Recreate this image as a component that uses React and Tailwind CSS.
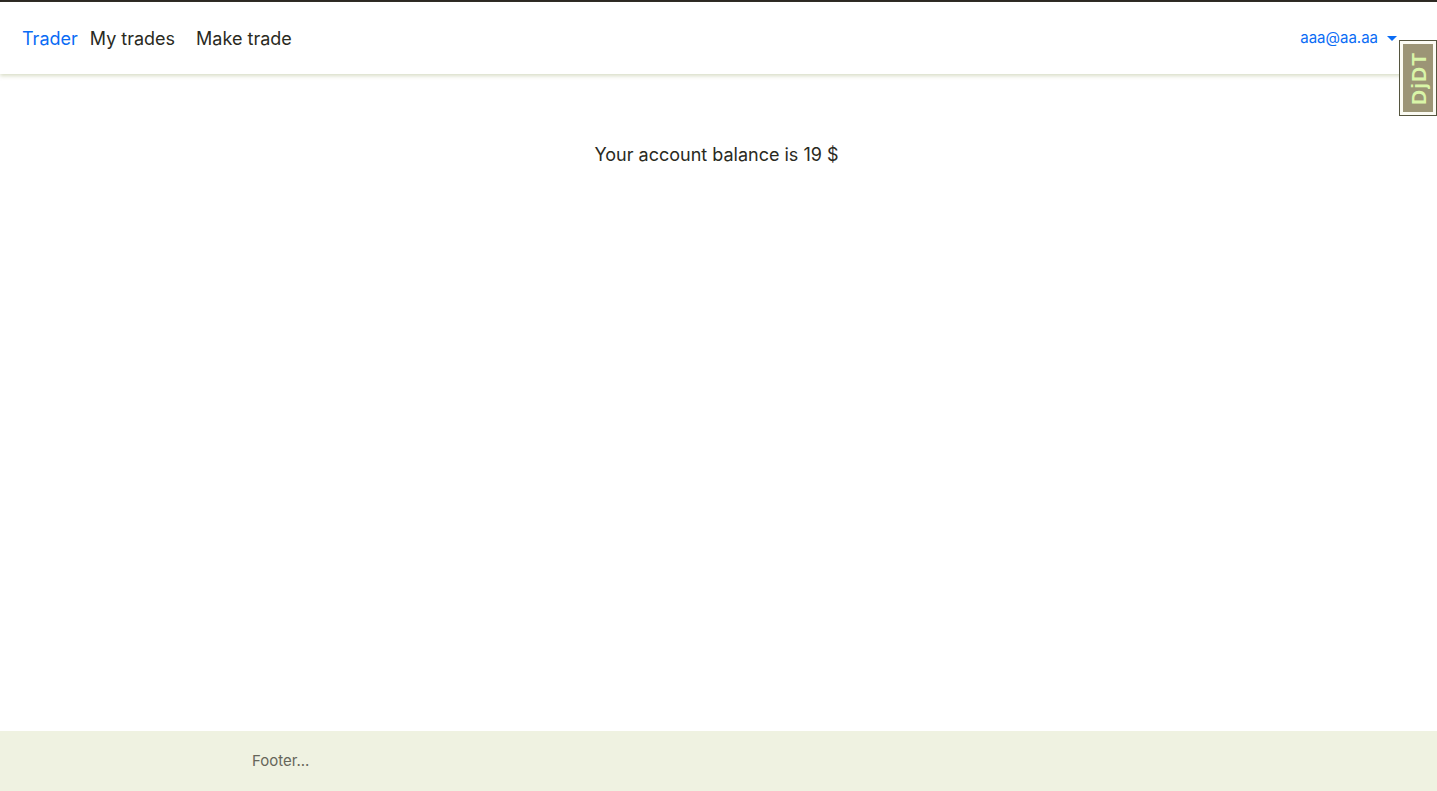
export default function App() {
  return (
    <div className="min-h-screen flex flex-col bg-white font-['Inter',sans-serif] text-[#2a2a1e]">
      <div className="h-[2px] bg-[#2a2622]" />
      <nav className="relative h-[72px] flex items-center justify-between pl-[22px] pr-[40px] bg-white shadow-[0_2px_4px_rgba(170,180,130,0.45)] z-10">
        <div className="flex items-center text-[18px]">
          <a className="text-[#0a6cf5] mr-[12px]">Trader</a>
          <a className="mr-[21px]">My trades</a>
          <a>Make trade</a>
        </div>
        <div className="flex items-center text-[15px] text-[#0a6cf5]">
          <span>aaa@aa.aa</span>
          <span className="ml-[9px] w-0 h-0 border-l-[5px] border-r-[5px] border-t-[5px] border-l-transparent border-r-transparent border-t-[#0a6cf5]" />
        </div>
        <div className="absolute right-0 top-[38px] w-[38px] h-[76px] border border-[#55553f] bg-[#fbfbf3] p-[3px]">
          <div className="w-full h-full bg-[#9c9576] flex items-center justify-center">
            <span className="-rotate-90 text-[#d9f5a8] font-bold text-[21px] tracking-[1px] leading-none whitespace-nowrap font-['Liberation_Sans',sans-serif]">DjDT</span>
          </div>
        </div>
      </nav>
      <main className="flex-1 flex justify-center pt-[69px]">
        <p className="text-[18px] leading-[24px] -ml-[4px]">Your account balance is 19 $</p>
      </main>
      <footer className="h-[60px] bg-[#eff2e1] flex items-center pl-[252px] pt-[1px] text-[15px] text-[#66665a]">
        Footer...
      </footer>
    </div>
  );
}
